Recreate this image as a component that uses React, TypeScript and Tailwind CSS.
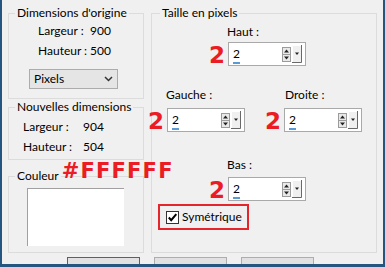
import React from "react"

const red = "text-[#ec1c24] font-['DejaVu_Sans',sans-serif] font-bold leading-none"

function UpDown() {
  return (
    <svg width="9" height="15" viewBox="0 0 9 15" className="ml-auto shrink-0">
      <rect x="0.5" y="0.5" width="8" height="14" fill="#e9e9e9" stroke="#9b9b9b" />
      <line x1="0" y1="7.5" x2="9" y2="7.5" stroke="#9b9b9b" />
      <path d="M2 5.5 L4.5 2.5 L7 5.5Z" fill="#222" />
      <path d="M2 9.5 L4.5 12.5 L7 9.5Z" fill="#222" />
    </svg>
  )
}

function DropButton() {
  return (
    <svg width="10" height="18" viewBox="0 0 10 18" className="ml-[1px] mr-[3px] shrink-0">
      <rect x="0" y="0" width="10" height="18" fill="#f0f0f0" />
      <path d="M0.5 17.5 V0.5 H9.5" stroke="#ffffff" fill="none" />
      <path d="M9.5 0 V17.5 H0" stroke="#696969" fill="none" />
      <path d="M3 7.5 H7 L5 10Z" fill="#222" />
    </svg>
  )
}

// spin field with the red annotation number on its left
function Spin() {
  return (
    <div className="relative flex h-[24px] w-[78px] items-center border border-[#a9a9a9] bg-white">
      <span className={`absolute right-full top-[1px] mr-[4px] text-[23px] ${red}`}>2</span>
      <div className="flex flex-col pl-[4px] pt-[2px]">
        <span className="leading-[16px]">2</span>
        <span className="h-[2px] w-[7px] bg-[#5b9bd5]" />
      </div>
      <UpDown />
      <DropButton />
    </div>
  )
}

export default function App() {
  return (
    <div className="h-[267px] w-[385px] overflow-hidden whitespace-nowrap border-b-[3px] border-l-2 border-r-2 border-[#24567f] bg-[#f0f0f0] font-['Lato','Noto_Sans',sans-serif] text-[12px] leading-[20px] text-black">
      <div className="flex gap-[7px] pl-[6px] pt-[5px]">
        {/* left column */}
        <div className="flex w-[136px] flex-col">
          <fieldset className="border border-[#dcdcdc] pb-[9px]">
            <legend className="ml-[6px] px-[2px] leading-[16px]">Dimensions d'origine</legend>
            <div className="grid grid-cols-[52px_auto] pl-[29px]">
              <span>Largeur :</span>
              <span>900</span>
              <span>Hauteur :</span>
              <span>500</span>
            </div>
            <div className="ml-[20px] mt-[8px] flex h-[20px] w-[89px] items-center justify-between border border-[#acacac] bg-[#e5e5e5] pl-[4px] pr-[4px]">
              <span>Pixels</span>
              <svg width="9" height="6" viewBox="0 0 9 6">
                <path d="M1 1 L4.5 4.5 L8 1" stroke="#333" strokeWidth="1.5" fill="none" />
              </svg>
            </div>
          </fieldset>

          <fieldset className="border border-[#dcdcdc] pb-[2px] pt-[2px]">
            <legend className="ml-[6px] px-[2px] leading-[16px]">Nouvelles dimensions</legend>
            <div className="grid grid-cols-[60px_auto] pl-[14px]">
              <span>Largeur :</span>
              <span>904</span>
              <span>Hauteur :</span>
              <span>504</span>
            </div>
          </fieldset>

          <fieldset className="mt-[8px] border border-[#dcdcdc] pb-[6px]">
            <legend className="relative ml-[6px] px-[2px] leading-[16px]">
              Couleur
              <span className={`absolute left-full top-[-7px] ml-[1px] text-[21px] tracking-[1.2px] ${red}`}>
                #FFFFFF
              </span>
            </legend>
            <div className="ml-[18px] mt-[4px] h-[58px] w-[97px] border-l border-t border-[#a0a0a0] bg-white" />
          </fieldset>
        </div>

        {/* right column */}
        <fieldset className="h-[248px] w-[226px] border border-[#dcdcdc]">
          <legend className="ml-[8px] px-[2px] leading-[16px]">Taille en pixels</legend>

          <div className="ml-[76px] mt-[1px] flex flex-col">
            <span className="-ml-[1px]">Haut :</span>
            <Spin />
          </div>

          <div className="mt-[19px] flex">
            <div className="ml-[15px] flex flex-col">
              <span className="-ml-[1px]">Gauche :</span>
              <div className="mt-[3px]">
                <Spin />
              </div>
            </div>
            <div className="ml-[39px] flex flex-col">
              <span className="ml-[1px]">Droite :</span>
              <div className="mt-[3px]">
                <Spin />
              </div>
            </div>
          </div>

          <div className="ml-[76px] mt-[23px] flex flex-col">
            <span className="-ml-[1px]">Bas :</span>
            <div className="mt-[2px]">
              <Spin />
            </div>
          </div>

          <div className="ml-[6px] mt-[3px] flex h-[26px] w-[91px] items-center gap-[3px] border-2 border-[#e4262c] pl-[6px]">
            <svg width="13" height="13" viewBox="0 0 13 13" className="shrink-0">
              <rect x="0.5" y="0.5" width="12" height="12" fill="#fff" stroke="#333" />
              <path d="M2.8 6.5 L5.2 9.2 L10.3 3.2" stroke="#000" strokeWidth="2" fill="none" />
            </svg>
            <span>Symétrique</span>
          </div>
        </fieldset>
      </div>

      {/* dialog buttons, cut off by the window edge */}
      <div className="ml-[65px] mt-[4px] flex gap-[14px]">
        <div className="h-[23px] w-[73px] border border-[#0078d7] bg-[#e1e1e1]" />
        <div className="h-[23px] w-[73px] border border-[#adadad] bg-[#e1e1e1]" />
        <div className="h-[23px] w-[73px] border border-[#adadad] bg-[#e1e1e1]" />
      </div>
    </div>
  )
}
